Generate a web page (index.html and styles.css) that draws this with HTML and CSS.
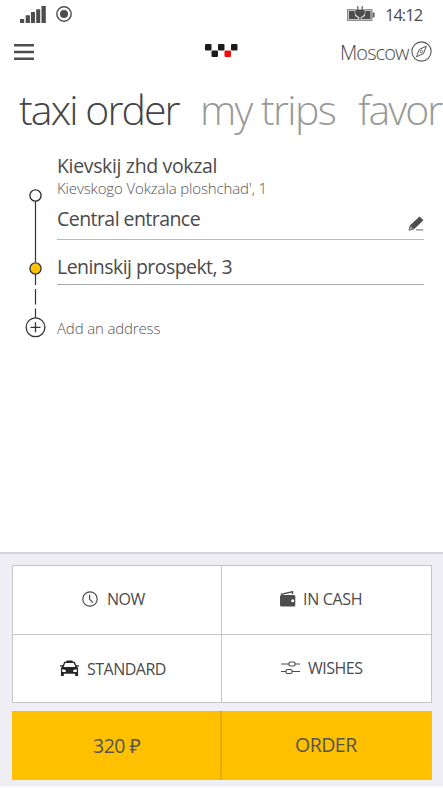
FILE: index.html
```html
<!DOCTYPE html>
<html lang="en">
<head>
<meta charset="utf-8">
<title>Taxi order</title>
<link rel="stylesheet" href="styles.css">
</head>
<body>
<div class="status">
  <svg class="signal" width="26" height="18" viewBox="0 0 26 18" fill="#4d4d4d"><path d="M0 13h4.2v4H0zM5.7 9.300h4.200V17H5.700zM11 6h4v11h-4zM16.200 3.200h4V17h-4zM21.500 0h4.300v17h-4.300z"/></svg>
  <svg class="record" width="16" height="16" viewBox="0 0 16 16"><circle cx="8" cy="8" r="7.200" fill="none" stroke="#4d4d4d" stroke-width="1.400"/><circle cx="8" cy="8" r="4" fill="#4d4d4d"/></svg>
  <svg class="battery" width="28" height="16" viewBox="0 0 28 16"><path d="M.6 3.600h24.200v10.800H.6z" fill="#ddd" stroke="#8a8a8a" stroke-width="1.200"/><path d="M25.400 6.500h2.200v5h-2.200z" fill="#666"/><path d="M2 5h6v5l3 2v1H2zM18 5h5.500v8H14.500v-1l3.500-2z" fill="#4d4d4d"/><path d="M10 0h1.600v3.500h2.800V0H16v3.500h2V8l-3 3h-1v3h-2v-3h-1L8 8V3.500h2z" fill="#4d4d4d" stroke="#ddd" stroke-width=".6"/></svg>
  <span class="time">14:12</span>
</div>
<header class="header">
  <svg class="menu" width="20" height="17" viewBox="0 0 20 17" fill="#4d4d4d"><path d="M0 0h20v2.600H0zM0 6.700h20v2.600H0zM0 13.400h20v2.600H0z"/></svg>
  <svg class="logo" width="33" height="14" viewBox="0 0 33 14" fill="#1a1a1a"><rect width="6.500" height="6.500" rx="1"/><rect x="6.500" y="6.500" width="6.500" height="6.500" rx="1"/><rect x="13" width="6.500" height="6.500" rx="1"/><rect x="19.500" y="6.500" width="6.500" height="6.500" rx="1" fill="#f20d0d"/><rect x="26" width="6.500" height="6.500" rx="1"/></svg>
  <span class="city">Moscow</span>
  <svg class="compass" width="21" height="21" viewBox="0 0 21 21" fill="none" stroke="#555"><circle cx="10.500" cy="10.500" r="9.600" stroke-width="1.100"/><path d="M15.300 5.200L12.500 12.500L5.500 15.800L8.200 8.500Z" stroke-width="1"/><circle cx="10.400" cy="10.500" r="1.200" stroke-width=".8"/></svg>
</header>
<nav class="tabs">
  <span class="tab active">taxi order</span>
  <span class="tab trips">my trips</span>
  <span class="tab favor">favor</span>
</nav>
<main class="route">
  <svg class="track" width="24" height="154" viewBox="0 0 24 154" fill="none" stroke="#333"><path d="M11.500 15V76M11.500 88v11M11.500 103v15.500M11.500 122.500v9.500" stroke-width="1.200"/><circle cx="11.500" cy="9.500" r="5.600" fill="#fff" stroke-width="1.400"/><circle cx="11.500" cy="82.500" r="5.600" fill="#ffc000" stroke-width="1.300"/><circle cx="11.500" cy="141.300" r="9.400" stroke-width="1.300"/><path d="M11.500 136.300v10M6.500 141.300h10" stroke-width="1.300"/></svg>
  <div class="stops">
    <div class="place">Kievskij zhd vokzal</div>
    <div class="street">Kievskogo Vokzala ploshchad', 1</div>
    <div class="entrance"><span class="ent-name">Central entrance</span>
      <svg class="pencil" width="16" height="16" viewBox="0 0 16 16"><path d="M11.500 .5L15.500 4.200L6 13.300L1.800 9.500Z" fill="#4d4d4d"/><path d="M2 10L5.500 13.200L1 14.300Z" fill="#aaa" stroke="#555" stroke-width=".8"/><path d="M8 13.900h7.200" stroke="#888" stroke-width="1.300"/></svg>
    </div>
    <div class="dest">Leninskij prospekt, 3</div>
    <div class="add">Add an address</div>
  </div>
</main>
<footer class="panel">
  <div class="options">
    <div class="option now"><svg width="16" height="16" viewBox="0 0 16 16" fill="none" stroke="#4d4d4d" stroke-width="1.200"><circle cx="8" cy="8" r="7.200"/><path d="M7.600 3.800v4.500l3.200 3.200"/></svg><span>NOW</span></div>
    <div class="option cash"><svg width="16" height="16" viewBox="0 0 16 16"><path d="M1 4.500L2 3L12.500.7V3" fill="none" stroke="#4d4d4d" stroke-width="1.400"/><rect x="0" y="4" width="15.300" height="11.500" rx="1.500" fill="#4d4d4d"/><circle cx="12.700" cy="9.700" r="1.500" fill="#fff"/></svg><span>IN CASH</span></div>
    <div class="option standard"><svg width="19" height="17" viewBox="0 0 20 17"><path d="M7 0h6l.5 1.500h2L17.500 6l1.500 2v8.500h-3V14H4v2.500H1V8l1.500-2L4.500 1.500h2zM0 5h3v1.500H0zM17 5h3v1.500h-3z" fill="#262626"/><path d="M5.500 2.800h9L16.200 7H3.800z" fill="#fff"/><path d="M2.300 9.300L6 10.200v2H2.300zM17.700 9.300L14 10.200v2h3.700z" fill="#fff"/></svg><span>STANDARD</span></div>
    <div class="option wishes"><svg width="19" height="14" viewBox="0 0 19 14" fill="none" stroke="#4d4d4d" stroke-width="1.100"><path d="M0 3h8M14 3h5M0 10.500h5M11 10.500h8"/><rect x="8" y="1" width="6" height="4" rx="1.200"/><rect x="5" y="8.500" width="6" height="4" rx="1.200"/></svg><span>WISHES</span></div>
  </div>
  <div class="actions">
    <div class="price">320 ₽</div>
    <div class="order">ORDER</div>
  </div>
</footer>
</body>
</html>
```
FILE: styles.css
```css
* { box-sizing: border-box; }
body {
  margin: 0;
  width: 443px;
  height: 788px;
  overflow: hidden;
  display: flex;
  flex-direction: column;
  background: #fff;
  color: #4a4a4a;
  font-family: "Open Sans", "Noto Sans", sans-serif;
  white-space: nowrap;
}
svg { flex: none; display: block; }
.status { display: flex; height: 30px; padding: 6px 0 0 20px; }
.record { margin-left: 10px; }
.battery { margin-left: 275px; }
.time { margin-left: 10px; font-size: 16.5px; line-height: 17px; letter-spacing: -1px; }
.header { display: flex; height: 44px; padding-left: 14px; }
.menu { margin-top: 14px; }
.logo { margin: 14px 0 0 171px; }
.city { margin-left: 102px; width: 71px; font-size: 20px; font-weight: 300; line-height: 45px; letter-spacing: -0.9px; }
.compass { margin-top: 11px; }
.tabs { display: flex; height: 79px; padding-left: 19px; font-size: 41px; font-weight: 300; line-height: 71px; letter-spacing: -1.9px; color: #999; overflow: hidden; }
.tab { flex: none; width: 181px; }
.active { color: #444; }
.trips { width: 158px; letter-spacing: -1.6px; }
.favor { width: auto; }
.route { display: flex; height: 399px; padding-left: 24px; }
.track { margin-top: 33px; }
.stops { width: 367px; margin-left: 9px; }
.place, .entrance, .dest { font-size: 19.5px; letter-spacing: -0.55px; }
.place { height: 26px; line-height: 25px; letter-spacing: -0.35px; }
.street { height: 20px; font-size: 15px; font-weight: 300; line-height: 19px; letter-spacing: -0.13px; color: #555; }
.entrance { display: flex; justify-content: space-between; height: 41px; line-height: 40px; border-bottom: 1px solid #bbb; }
.pencil { margin-top: 17px; }
.dest { height: 45px; line-height: 54px; border-bottom: 1px solid #aaa; }
.add { font-size: 15px; font-weight: 300; line-height: 87px; letter-spacing: -0.15px; color: #555; }
.panel { height: 236px; padding: 12px; background: #efeef5; border-top: 2px solid #d5d5d9; border-bottom: 2px solid #faf9fc; }
.options { display: grid; grid-template-columns: 208px 209px; grid-template-rows: 68px 67px; gap: 1px; width: 420px; height: 138px; border: 1px solid #c4c4c4; background: #c4c4c4; margin-top: -1px; }
.option { display: flex; align-items: center; padding-bottom: 2px; background: #fff; font-size: 16px; letter-spacing: -0.5px; }
.now { padding-left: 69px; gap: 9px; }
.cash { padding-left: 58px; gap: 7px; letter-spacing: -0.3px; }
.standard { padding-left: 47px; padding-bottom: 0; gap: 8px; }
.wishes { padding-left: 59px; gap: 8px; }
.actions { display: grid; grid-template-columns: 208px 212px; width: 420px; height: 69px; margin-top: 8px; background: #ffc000; color: #555; font-size: 19.5px; line-height: 68px; letter-spacing: -0.5px; }
.price { height: 69px; padding: 1px 0 0 81px; }
.order { height: 69px; padding-left: 73px; border-left: 2px solid #e2ae0c; }
```
